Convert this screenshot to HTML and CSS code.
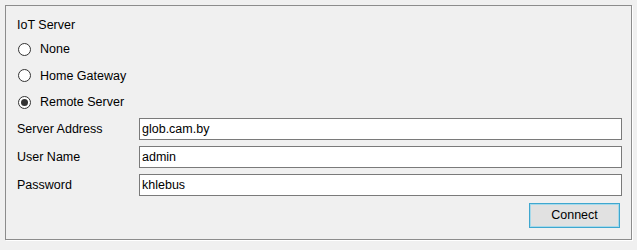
FILE: index.html
```html
<!DOCTYPE html>
<html lang="en">
<head>
    <meta charset="UTF-8">
    <title>IoT Server</title>
    <link rel="stylesheet" href="styles.css">
</head>
<body>
    <div class="group">
        <div class="group-title">IoT Server</div>

        <!-- mode -->
        <label class="radio-row"><input type="radio" name="mode"> None</label>
        <label class="radio-row"><input type="radio" name="mode"> Home Gateway</label>
        <label class="radio-row"><input type="radio" name="mode" checked> Remote Server</label>

        <div class="form">
            <label>Server Address</label>
            <input type="text" value="glob.cam.by">
            <label>User Name</label>
            <input type="text" value="admin">
            <label>Password</label>
            <input type="text" value="khlebus">
        </div>

        <div class="actions">
            <button id="connectBtn">Connect</button>
        </div>
    </div>
</body>
</html>
```

FILE: styles.css
```css
* { margin: 0; padding: 0; box-sizing: border-box; }
body {
    background: #f0f0f0;
    font-family: "Liberation Sans", Arial, sans-serif;
    font-size: 12.5px;
    color: #000;
}
.group {
    margin: 5px;
    width: 627px;
    height: 235px;
    border: 1px solid #8c8c8c;
    box-shadow: 1px 1px 0 #fff;
    padding: 11px 9px 0 11px;
}
.group-title { line-height: 16px; margin-bottom: 3px; }
.radio-row {
    display: flex;
    align-items: center;
    height: 26.5px;
    gap: 9px;
}
.radio-row input {
    appearance: none;
    width: 13px;
    height: 13px;
    margin-left: 1px;
    border: 1px solid #333;
    border-radius: 50%;
    background: #fff;
    display: grid;
    place-content: center;
}
.radio-row input:checked::before {
    content: "";
    width: 7px;
    height: 7px;
    border-radius: 50%;
    background: #333;
}
.form {
    display: grid;
    grid-template-columns: 122px 483px;
    grid-auto-rows: 22px;
    row-gap: 6px;
    margin-top: 2px;
    align-items: center;
}
.form input {
    height: 22px;
    border: 1px solid #7a7a7a;
    background: #fff;
    font: inherit;
    padding: 0 2px;
    outline: none;
}
.actions {
    display: flex;
    justify-content: flex-end;
    margin-top: 7px;
    padding-right: 2px;
}
#connectBtn {
    width: 91px;
    height: 25px;
    background: #e1e1e1;
    border: 1px solid #3fa7cf;
    box-shadow: inset 0 0 0 1px #a6d9ea;
    font: inherit;
    color: #000;
}
```
